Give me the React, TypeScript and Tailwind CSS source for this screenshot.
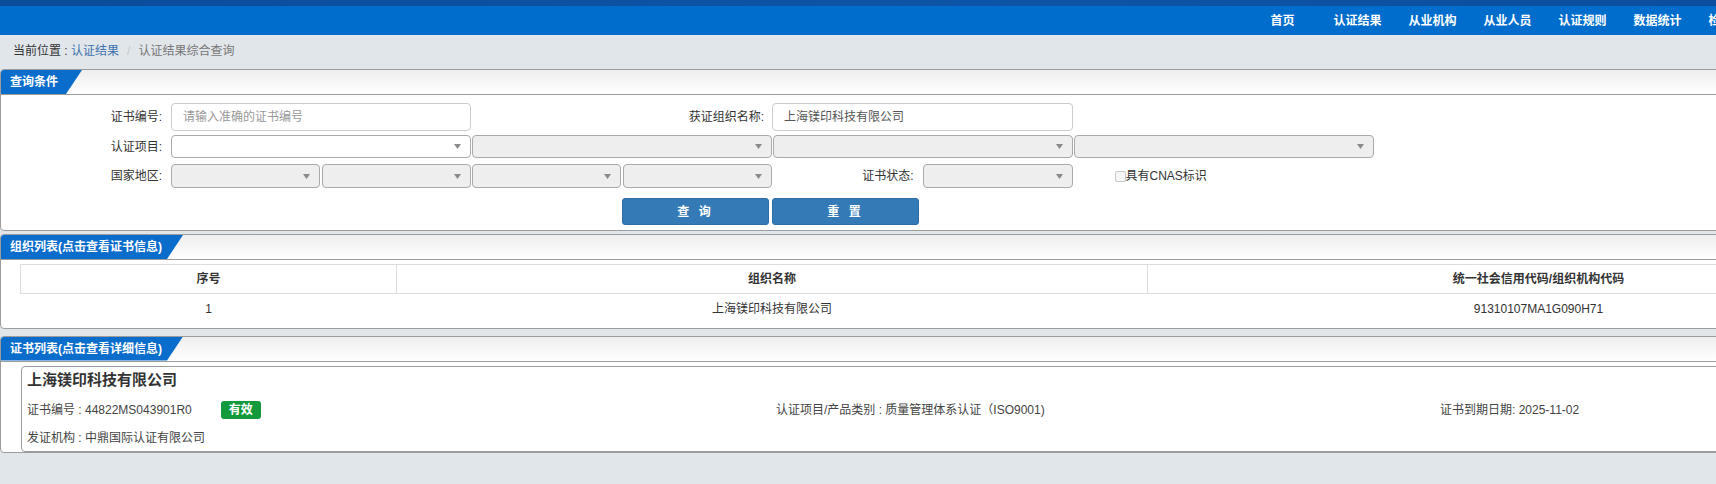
// Certification result query page — static recreation.

const FONT = "[font-family:'Liberation_Sans','Noto_Sans_CJK_SC',sans-serif]";

const navItems = ["首页", "认证结果", "从业机构", "从业人员", "认证规则", "数据统计", "检验检测", "公告公示"];

function Caret() {
  return (
    <svg width="7" height="5" viewBox="0 0 7 5" className="shrink-0">
      <path d="M0 0 L7 0 L3.5 5 Z" fill="#8a8a8a" />
    </svg>
  );
}

function SelectBox({ className, white }: { className: string; white?: boolean }) {
  return (
    <div
      className={`flex items-center justify-end rounded-[4px] border border-[#aaaaaa] pr-[9px] ${
        white ? "bg-white" : "bg-[#eeeeee]"
      } ${className}`}
    >
      <Caret />
    </div>
  );
}

function PanelHeader({ title, tabClass }: { title: string; tabClass: string }) {
  return (
    <div className="flex h-[25px] rounded-t-[4px] border-b border-[#9c9c9c] bg-gradient-to-b from-[#eeeeee] to-white">
      <div
        className={`flex h-full items-center rounded-tl-[3px] bg-[#0a6dcc] pl-[9px] text-[12px] font-bold text-white [clip-path:polygon(0_0,100%_0,calc(100%_-_16px)_100%,0_100%)] ${tabClass}`}
      >
        {title}
      </div>
    </div>
  );
}

function Label({ text, className }: { text: string; className: string }) {
  return <div className={`shrink-0 text-right text-[12px] text-[#333] ${className}`}>{text}</div>;
}

export default function App() {
  return (
    <div className={`h-[484px] w-[1716px] overflow-hidden bg-[#e1e6eb] ${FONT}`}>
      <div className="w-[1950px]">
        {/* top banner strip */}
        <div className="h-[6px] bg-gradient-to-r from-[#0b4c9a] via-[#0d55a8] to-[#0b4c9a]" />
        <nav className="flex h-[29px] items-center bg-[#006dcd] pl-[1245px]">
          {navItems.map((n) => (
            <div key={n} className="w-[75px] shrink-0 text-center text-[12px] font-bold text-white">
              {n}
            </div>
          ))}
        </nav>

        {/* breadcrumb */}
        <div className="h-[34px] pl-[13px] pt-[7px] text-[12px] leading-[18px]">
          <span className="text-[#333]">当前位置 : </span>
          <span className="text-[#3f72ad]">认证结果</span>
          <span className="px-[8px] text-[#c4c8cc]">/</span>
          <span className="text-[#777]">认证结果综合查询</span>
        </div>

        {/* query panel */}
        <div className="rounded-[4px] border border-[#9c9c9c] bg-white">
          <PanelHeader title="查询条件" tabClass="w-[81px]" />
          <div className="pb-[5px] pt-[8px]">
            <div className="flex h-[28px] items-center">
              <Label text="证书编号:" className="w-[161px]" />
              <div className="ml-[9px] flex h-[28px] w-[300px] items-center rounded-[4px] border border-[#cccccc] px-[11px] text-[12px] text-[#999]">
                请输入准确的证书编号
              </div>
              <Label text="获证组织名称:" className="w-[293px]" />
              <div className="ml-[8px] flex h-[28px] w-[301px] items-center rounded-[4px] border border-[#cccccc] px-[11px] text-[12px] text-[#555]">
                上海镁印科技有限公司
              </div>
            </div>

            <div className="mt-[4px] flex h-[23px] items-center">
              <Label text="认证项目:" className="w-[161px]" />
              <div className="ml-[9px] flex gap-[1px]">
                <SelectBox className="h-[23px] w-[300px]" white />
                <SelectBox className="h-[23px] w-[300px]" />
                <SelectBox className="h-[23px] w-[300px]" />
                <SelectBox className="h-[23px] w-[300px]" />
              </div>
            </div>

            <div className="mt-[6px] flex h-[24px] items-center">
              <Label text="国家地区:" className="w-[161px]" />
              <div className="ml-[9px] flex gap-[1.5px]">
                <SelectBox className="h-[24px] w-[149px]" />
                <SelectBox className="h-[24px] w-[149px]" />
                <SelectBox className="h-[24px] w-[149px]" />
                <SelectBox className="h-[24px] w-[149px]" />
              </div>
              <Label text="证书状态:" className="w-[142px]" />
              <SelectBox className="ml-[9px] h-[24px] w-[150px]" />
              <div className="ml-[42px] flex items-center text-[12px] text-[#333]">
                <span className="inline-block h-[11px] w-[11px] rounded-[2px] border border-[#c8c8c8] bg-[#f6f6f6]" />
                <span>具有CNAS标识</span>
              </div>
            </div>

            <div className="ml-[621px] mt-[10px] flex gap-[3px]">
              <button className="h-[27px] w-[147px] rounded-[3px] border border-[#2e6da4] bg-[#337ab7] text-[12px] font-bold tracking-[3px] text-white">
                查 询
              </button>
              <button className="h-[27px] w-[147px] rounded-[3px] border border-[#2e6da4] bg-[#337ab7] text-[12px] font-bold tracking-[3px] text-white">
                重 置
              </button>
            </div>
          </div>
        </div>

        {/* organisation list */}
        <div className="mt-[3px] rounded-[4px] border border-[#9c9c9c] bg-white">
          <PanelHeader title="组织列表(点击查看证书信息)" tabClass="w-[182px]" />
          <div className="px-[19px] pb-[4px] pt-[4px]">
            <table className="w-full border-collapse text-[12px] text-[#333]">
              <thead>
                <tr className="h-[29px]">
                  <th className="w-[376px] border border-[#dddddd] font-bold">序号</th>
                  <th className="w-[751px] border border-[#dddddd] font-bold">组织名称</th>
                  <th className="border border-[#dddddd] font-bold">统一社会信用代码/组织机构代码</th>
                </tr>
              </thead>
              <tbody>
                <tr className="h-[30px] text-center">
                  <td>1</td>
                  <td>上海镁印科技有限公司</td>
                  <td>91310107MA1G090H71</td>
                </tr>
              </tbody>
            </table>
          </div>
        </div>

        {/* certificate list */}
        <div className="mt-[7px] rounded-[4px] border border-[#9c9c9c] bg-white">
          <PanelHeader title="证书列表(点击查看详细信息)" tabClass="w-[182px]" />
          <div className="px-[20px] pt-[4px]">
            <div className="rounded-[4px] border border-[#9c9c9c] px-[5px] pb-[3px] pt-[3px] text-[12px] text-[#444]">
              <div className="h-[20px] text-[15px] font-bold leading-[20px] text-[#333]">上海镁印科技有限公司</div>
              <div className="mt-[10px] flex h-[20px] items-center">
                <div className="flex w-[749px] items-center">
                  <span>证书编号 : 44822MS043901R0</span>
                  <span className="ml-[29px] flex h-[18px] w-[40px] items-center justify-center rounded-[3px] bg-[#12993b] text-[12px] font-bold text-white">
                    有效
                  </span>
                </div>
                <div className="w-[664px]">认证项目/产品类别 : 质量管理体系认证（ISO9001)</div>
                <div>证书到期日期: 2025-11-02</div>
              </div>
              <div className="mt-[8px] h-[20px] leading-[20px]">发证机构 : 中鼎国际认证有限公司</div>
            </div>
          </div>
        </div>
      </div>
    </div>
  );
}
